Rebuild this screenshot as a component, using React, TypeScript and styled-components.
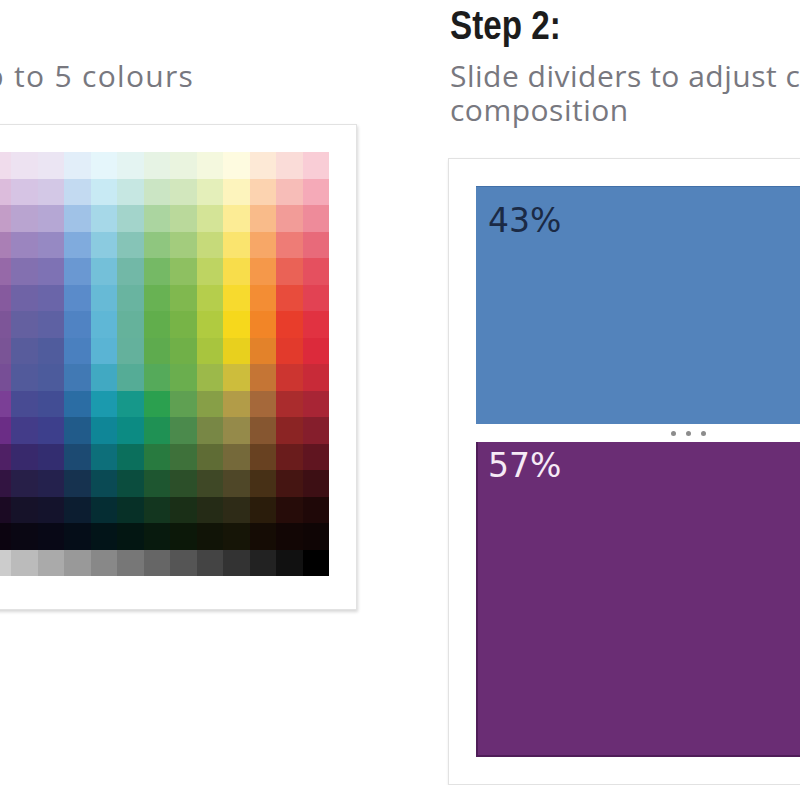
import React from "react";
import styled, { createGlobalStyle } from "styled-components";

const GlobalStyle = createGlobalStyle`
  html, body {
    margin: 0;
    padding: 0;
    background: #ffffff;
  }
  body {
    overflow: hidden;
    font-family: "Open Sans", "Noto Sans", sans-serif;
  }
`;

// one entry per column, top (lightest) row first; the grey row is added below
const COLUMNS: string[][] = [
  ["#fbe0ee", "#f6c2dc", "#ef9fc6", "#e87db1", "#e060a0", "#d94c93", "#d3408b", "#c93a85", "#b8347a", "#9e2c6a", "#84245a", "#661b46", "#461230", "#280a1b", "#13050d"],
  ["#f5ddf0", "#eabfe3", "#db9bd1", "#cc7bc0", "#bf62b2", "#b453a8", "#ab48a1", "#a2439a", "#923d8d", "#7e357a", "#692c66", "#51214f", "#381737", "#200c1f", "#10060f"],
  ["#f0ddf0", "#e0bfe1", "#cb9dcd", "#b67fbb", "#a468ad", "#9659a3", "#8c509c", "#844c97", "#7b4591", "#6e3a86", "#5d2e74", "#47225a", "#30173d", "#1b0c22", "#0d0611"],
  ["#f0dcec", "#dcbcdc", "#c39dc7", "#aa7fb5", "#9669a8", "#865a9e", "#7d5598", "#7a5496", "#774e96", "#7b3f96", "#6b2d86", "#4f2065", "#321441", "#1b0a23", "#0c0410"],
  ["#ede2f1", "#d6c4e4", "#b9a4d0", "#9b85bf", "#8370b0", "#6f63a6", "#6460a0", "#585c9c", "#525a9b", "#484b93", "#433c89", "#38296c", "#271f48", "#161229", "#0a0713"],
  ["#ebe5f3", "#d3c8e6", "#b5a7d4", "#9689c3", "#7e72b4", "#6a65a9", "#5e61a3", "#505c9d", "#4c5b9c", "#424d94", "#3d3f8c", "#332d70", "#24214d", "#14132c", "#080816"],
  ["#e2eef9", "#c3daf1", "#a0c2e7", "#80abdd", "#6a98d2", "#5a8bca", "#5083c3", "#4a80bf", "#4179b4", "#2b6da4", "#215b8a", "#1c4a72", "#16324f", "#0c1d30", "#050d18"],
  ["#e5f6fb", "#c8eaf4", "#a6d8e8", "#8bcbe0", "#74c0d9", "#67bad6", "#5fb7d6", "#5ab4d4", "#41a9c2", "#1b9aae", "#0f8697", "#0d6f7a", "#0a4a54", "#052d33", "#021418"],
  ["#e4f4f2", "#c6e7e2", "#a3d4cb", "#86c4b7", "#72b8a7", "#69b4a0", "#65b29b", "#64b19c", "#55ac96", "#16988a", "#0c8b83", "#0b6f5c", "#0b4d3e", "#073027", "#031612"],
  ["#e6f3e4", "#cbe5c4", "#abd5a0", "#8fc67f", "#75b965", "#68b253", "#61ae4c", "#5eab4e", "#55aa5a", "#2ba04f", "#1f9154", "#287a3f", "#1e5630", "#13361f", "#081a0e"],
  ["#eaf4df", "#d2e7bd", "#bad99b", "#a3cc7d", "#8ec061", "#80b84f", "#77b447", "#70b048", "#6aae4e", "#5fa052", "#4b8a4c", "#3e713a", "#2c4f29", "#1a2f17", "#0c1809"],
  ["#f4f8de", "#e4efba", "#d4e497", "#c6da7a", "#bed462", "#b5ce4c", "#b0cb40", "#a8c53e", "#9cb94a", "#879f47", "#788745", "#5f6c35", "#3f4826", "#252b16", "#111407"],
  ["#fefbe0", "#fdf4bd", "#fcec95", "#fae46e", "#f8dd4b", "#f7da2e", "#f6d81c", "#e8d01e", "#cdbd3c", "#b29c48", "#958a4a", "#75693a", "#4f4728", "#2e2b17", "#161507"],
  ["#fde9d6", "#fcd3b0", "#f9bb8a", "#f7a767", "#f5984a", "#f38d34", "#f28527", "#e3822a", "#c57535", "#a5683a", "#865630", "#684121", "#473016", "#2a1c0b", "#150c05"],
  ["#fadcd8", "#f7bdb8", "#f29c98", "#ee7c76", "#ea6256", "#e84c3c", "#e83d2b", "#e23a2c", "#cc3530", "#aa2c2d", "#8b2424", "#6a1c1c", "#451512", "#260c09", "#120605"],
  ["#f9cdd6", "#f5aab8", "#ee8b9a", "#e86a7a", "#e5505f", "#e24253", "#e13241", "#dc2a3b", "#c82a38", "#a82535", "#851e2c", "#601520", "#3d0f14", "#1f0808", "#0f0505"],
];

const GREYS = COLUMNS.map((_, i) => {
  const v = Math.max(0, 255 - i * 17).toString(16).padStart(2, "0");
  return `#${v}${v}${v}`;
});

const ROWS: string[][] = [
  ...COLUMNS[0].map((_, r) => COLUMNS.map((col) => col[r])),
  GREYS,
];

const SEGMENTS = [
  { label: "43%", share: 0.43, color: "#5383bb", text: "#1b2a45", edge: "inset 0 1px 0 #4270a8", top: 18 },
  { label: "57%", share: 0.57, color: "#6a2d74", text: "#f6eaf6", edge: "inset 2px -2px 0 #4f1d58", top: 7 },
];

const SEGMENT_SPACE = 553;

const Page = styled.div`
  display: flex;
  align-items: flex-start;
  gap: 91px;
  margin-left: -123px;
  width: 1200px;
`;

const Step = styled.section`
  flex: none;
  width: 480px;
  display: flex;
  flex-direction: column;
`;

const StepTitle = styled.h2`
  margin: 1px 0 0 2px;
  font-family: "Liberation Sans", Arial, sans-serif;
  font-weight: 700;
  font-size: 40px;
  line-height: 48px;
  color: #1c1c1c;
  transform: scaleX(0.83);
  transform-origin: left center;
`;

const StepText = styled.p<{ $shift?: number; $spacing?: number }>`
  margin: 10px 0 0 ${(p) => 2 + (p.$shift ?? 0)}px;
  font-size: 30px;
  line-height: 34px;
  letter-spacing: ${(p) => p.$spacing ?? 0.5}px;
  color: #78787f;
`;

const Card = styled.div<{ $bottom: number }>`
  box-sizing: border-box;
  width: 480px;
  margin-top: 31px;
  padding: 27px 27px ${(p) => p.$bottom}px;
  background: #ffffff;
  border: 1px solid #e2e2e2;
  box-shadow: 1px 2px 3px rgba(0, 0, 0, 0.16);
`;

const Swatches = styled.div`
  display: grid;
  grid-template-columns: repeat(16, 26.5px);
  grid-auto-rows: 26.5px;
`;

const Swatch = styled.div<{ $color: string }>`
  background: ${(p) => p.$color};
`;

const Bars = styled.div`
  display: flex;
  flex-direction: column;
`;

const Segment = styled.div<{ $color: string; $text: string; $edge: string; $top: number }>`
  box-sizing: border-box;
  padding: ${(p) => p.$top}px 12px 0;
  background: ${(p) => p.$color};
  color: ${(p) => p.$text};
  box-shadow: ${(p) => p.$edge};
  font-family: "DejaVu Sans", Verdana, sans-serif;
  font-size: 33px;
  line-height: 33px;
`;

const Divider = styled.div`
  height: 18px;
  display: flex;
  align-items: center;
  justify-content: center;
  gap: 10px;
`;

const Dot = styled.span`
  width: 5px;
  height: 5px;
  border-radius: 50%;
  background: #8c8c8c;
`;

export default function App() {
  return (
    <>
      <GlobalStyle />
      <Page>
        <Step>
          <StepTitle>Step 1:</StepTitle>
          <StepText $shift={-13} $spacing={1.3}>
            Select up to 5 colours
          </StepText>
          <Card $bottom={33}>
            <Swatches>
              {ROWS.map((row, r) =>
                row.map((c, i) => <Swatch key={`${r}-${i}`} $color={c} />)
              )}
            </Swatches>
          </Card>
        </Step>
        <Step>
          <StepTitle>Step 2:</StepTitle>
          <StepText>Slide dividers to adjust colour composition</StepText>
          <Card $bottom={27}>
            <Bars>
              {SEGMENTS.map((s, i) => (
                <React.Fragment key={s.label}>
                  {i > 0 && (
                    <Divider>
                      <Dot />
                      <Dot />
                      <Dot />
                    </Divider>
                  )}
                  <Segment
                    $color={s.color}
                    $text={s.text}
                    $edge={s.edge}
                    $top={s.top}
                    style={{ height: Math.round(SEGMENT_SPACE * s.share) }}
                  >
                    {s.label}
                  </Segment>
                </React.Fragment>
              ))}
            </Bars>
          </Card>
        </Step>
      </Page>
    </>
  );
}
